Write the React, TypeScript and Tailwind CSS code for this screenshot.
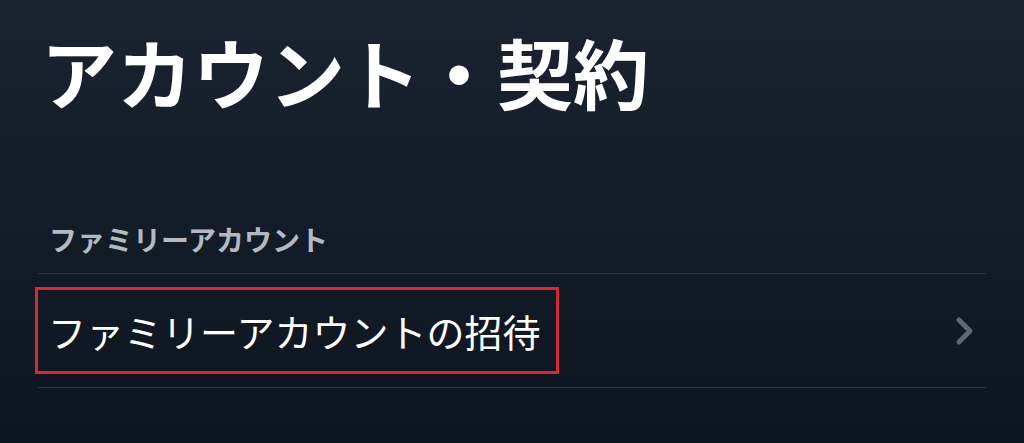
export default function App() {
  return (
    <div className="h-[443px] w-[1024px] overflow-hidden bg-gradient-to-b from-[#1b2331] to-[#0d1520] font-['Noto_Sans_CJK_JP','Noto_Sans',sans-serif]">
      <div className="px-[38px]">
        <h1 className="pt-[33px] pl-[3px] text-[76px] font-bold leading-[76px] text-white">
          アカウント・契約
        </h1>
        <div className="mt-[116px] px-[11px] text-[28px] font-semibold leading-[28px] text-[#b4b9c1]">
          ファミリーアカウント
        </div>
        <div className="mt-[20px] flex h-[115px] items-center justify-between border-y border-[#2d3540]">
          <div className="-ml-[3px] flex h-[87px] items-center border-[3px] border-[#d42a35] pl-[10px] pr-[16px] text-[38px] leading-[38px] text-white">
            ファミリーアカウントの招待
          </div>
          <svg
            className="mr-[11px]"
            width="20"
            height="30"
            viewBox="0 0 20 30"
            fill="none"
            stroke="#5f6670"
            strokeWidth="5"
            strokeLinecap="round"
            strokeLinejoin="round"
          >
            <path d="M4 4 L15 15 L4 26" />
          </svg>
        </div>
      </div>
    </div>
  );
}
